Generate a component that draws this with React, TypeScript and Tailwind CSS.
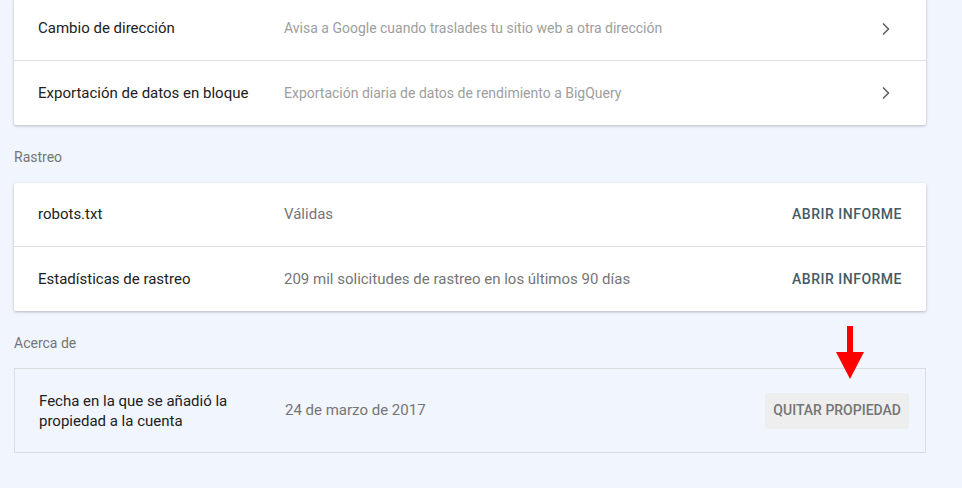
import { ChevronRight } from "lucide-react";

type Row = { label: string; value: string; action?: string };

const rowsTop: Row[] = [
  {
    label: "Cambio de dirección",
    value: "Avisa a Google cuando traslades tu sitio web a otra dirección",
  },
  {
    label: "Exportación de datos en bloque",
    value: "Exportación diaria de datos de rendimiento a BigQuery",
  },
];

const rowsCrawl: Row[] = [
  { label: "robots.txt", value: "Válidas", action: "ABRIR INFORME" },
  {
    label: "Estadísticas de rastreo",
    value: "209 mil solicitudes de rastreo en los últimos 90 días",
    action: "ABRIR INFORME",
  },
];

function CardRow({ row, last }: { row: Row; last: boolean }) {
  return (
    <div
      className={
        "flex h-16 items-center pl-6 pr-6 " +
        (last ? "" : "border-b border-[#e0e0e0]")
      }
    >
      <div className="w-[246px] shrink-0 text-[15px] text-[#212121]">
        {row.label}
      </div>
      <div
        className={
          "flex-1 " +
          (row.action
            ? "text-[15px] text-[#757575]"
            : "text-[14px] text-[#9e9e9e]")
        }
      >
        {row.value}
      </div>
      {row.action ? (
        <div className="text-[14px] font-medium tracking-[0.5px] text-[#455a64]">
          {row.action}
        </div>
      ) : (
        <ChevronRight className="mr-[6px] size-5 text-[#616161]" strokeWidth={2} />
      )}
    </div>
  );
}

function Card({ rows, className = "" }: { rows: Row[]; className?: string }) {
  return (
    <div
      className={
        "rounded-[2px] bg-white shadow-[0_1px_3px_rgba(0,0,0,0.25)] " + className
      }
    >
      {rows.map((r, i) => (
        <CardRow key={i} row={r} last={i === rows.length - 1} />
      ))}
    </div>
  );
}

export default function App() {
  return (
    <div
      className="h-[488px] w-[962px] overflow-hidden bg-[#f1f5fd] pl-[14px] pr-9"
      style={{ fontFamily: "Roboto, 'Noto Sans', sans-serif" }}
    >
      {/* top card is scrolled partly out of view */}
      <Card rows={rowsTop} className="-mt-[3px]" />

      <div className="mt-[22px] text-[14px] text-[#757575]">Rastreo</div>
      <Card rows={rowsCrawl} className="mt-[15px]" />

      <div className="mt-[22px] text-[14px] text-[#757575]">Acerca de</div>
      <div className="relative mt-[14px] flex h-[85px] items-center border border-[#dadce0] pl-6 pr-4">
        <div className="w-[246px] shrink-0 text-[15px] leading-[20px] text-[#212121]">
          Fecha en la que se añadió la
          <br />
          propiedad a la cuenta
        </div>
        <div className="flex-1 text-[15px] text-[#757575]">24 de marzo de 2017</div>
        <div className="flex h-9 items-center rounded-[3px] bg-[#eeeeee] px-2 text-[14px] font-medium text-[#757575]">
          QUITAR PROPIEDAD
        </div>
        <svg
          className="absolute left-[820px] top-[-43px]"
          width="30"
          height="54"
          viewBox="0 0 30 54"
        >
          <rect x="12" y="0" width="6" height="28" fill="#ff0000" />
          <polygon points="1,26 29,26 15,53" fill="#ff0000" />
        </svg>
      </div>
    </div>
  );
}
